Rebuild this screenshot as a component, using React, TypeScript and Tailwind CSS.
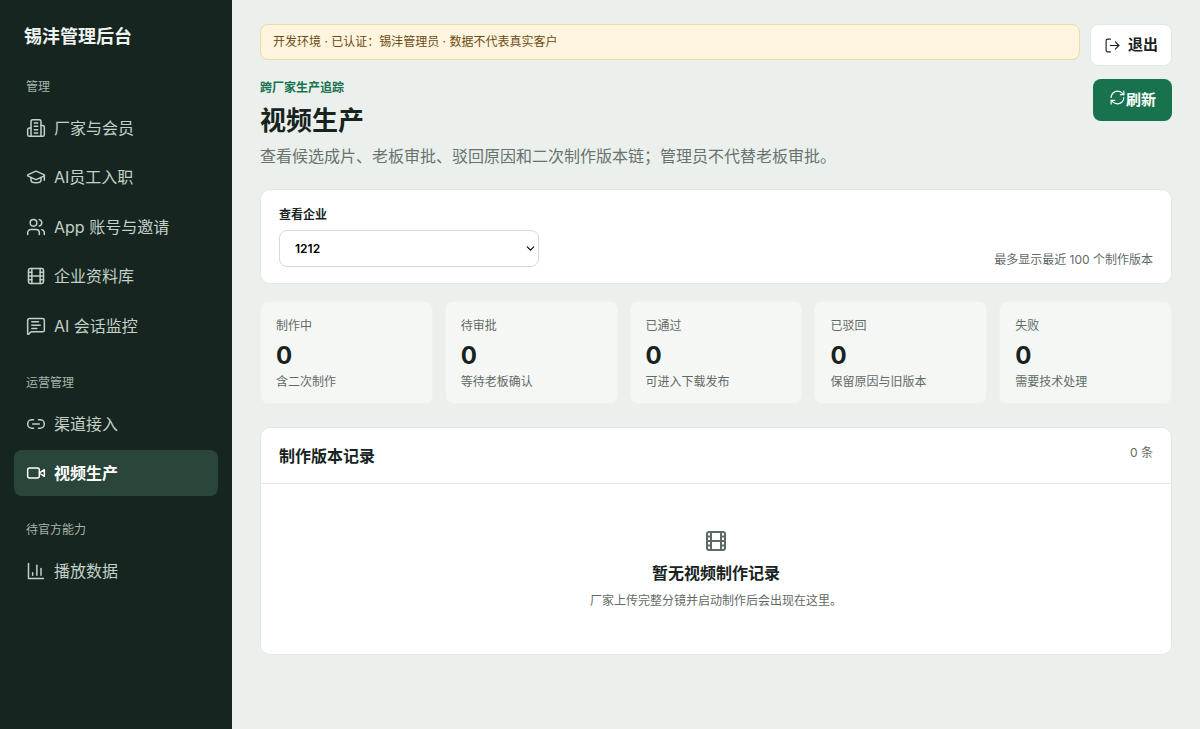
import {
  ChevronDown,
  Film,
  GraduationCap,
  Link2,
  LogOut,
  MessageSquareText,
  RefreshCw,
  Users,
} from "lucide-react";
import type { ReactNode } from "react";

function Glyph({ children }: { children: ReactNode }) {
  return (
    <svg
      width="20"
      height="20"
      viewBox="0 0 24 24"
      fill="none"
      stroke="currentColor"
      strokeWidth={1.8}
      strokeLinecap="round"
      strokeLinejoin="round"
    >
      {children}
    </svg>
  );
}

function BuildingIcon() {
  return (
    <Glyph>
      <path d="M6 22V4a2 2 0 0 1 2-2h8a2 2 0 0 1 2 2v18Z" />
      <path d="M6 12H4a2 2 0 0 0-2 2v6a2 2 0 0 0 2 2h2" />
      <path d="M18 9h2a2 2 0 0 1 2 2v9a2 2 0 0 1-2 2h-2" />
      <path d="M10 6h4" />
      <path d="M10 10h4" />
      <path d="M10 14h4" />
      <path d="M10 18h4" />
    </Glyph>
  );
}

function VideoIcon() {
  return (
    <Glyph>
      <path d="m22 8-6 4 6 4V8Z" />
      <rect x="2" y="6" width="14" height="12" rx="2" />
    </Glyph>
  );
}

function ChartIcon() {
  return (
    <Glyph>
      <path d="M3 3v18h18" />
      <path d="M13 17V5" />
      <path d="M18 17V9" />
      <path d="M8 17v-3" />
    </Glyph>
  );
}

const navGroups = [
  {
    title: "管理",
    items: [
      { label: "厂家与会员", icon: <BuildingIcon /> },
      { label: "AI员工入职", icon: <GraduationCap size={20} strokeWidth={1.8} /> },
      { label: "App 账号与邀请", icon: <Users size={20} strokeWidth={1.8} /> },
      { label: "企业资料库", icon: <Film size={20} strokeWidth={1.8} /> },
      { label: "AI 会话监控", icon: <MessageSquareText size={20} strokeWidth={1.8} /> },
    ],
  },
  {
    title: "运营管理",
    items: [
      { label: "渠道接入", icon: <Link2 size={20} strokeWidth={1.8} /> },
      { label: "视频生产", icon: <VideoIcon />, active: true },
    ],
  },
  {
    title: "待官方能力",
    items: [{ label: "播放数据", icon: <ChartIcon /> }],
  },
];

const stats = [
  { label: "制作中", note: "含二次制作" },
  { label: "待审批", note: "等待老板确认" },
  { label: "已通过", note: "可进入下载发布" },
  { label: "已驳回", note: "保留原因与旧版本" },
  { label: "失败", note: "需要技术处理" },
];

function Sidebar() {
  return (
    <aside className="w-[232px] shrink-0 bg-[#172520] px-[14px] pt-[25px]">
      <h1 className="px-[10px] text-[18px] leading-[24px] font-bold text-[#eef3ef]">
        锡沣管理后台
      </h1>
      <div className="mt-[27.5px]">
        {navGroups.map((group) => (
          <div key={group.title} className="mb-[24px]">
            <p className="mb-[8px] px-[12px] text-[12px] leading-[20px] text-[#a5b6ac]">
              {group.title}
            </p>
            <div className="flex flex-col gap-[3.5px]">
              {group.items.map((item) => (
                <div
                  key={item.label}
                  className={`flex h-[46px] items-center gap-[8px] rounded-lg px-[12px] text-[16px] ${item.active ? "bg-[#2a453a] font-bold text-white" : "text-[#c3d1c8]"}`}
                >
                  {item.icon}
                  <span>{item.label}</span>
                </div>
              ))}
            </div>
          </div>
        ))}
      </div>
    </aside>
  );
}

function StatCard({ label, note }: { label: string; note: string }) {
  return (
    <div className="flex-1 rounded-lg border border-[#eff2f0] bg-[#f5f7f5] px-[15px] pt-[15px] pb-[11px]">
      <p className="text-[12px] leading-[18px] text-[#5f6b65]">{label}</p>
      <p className="mt-[5px] text-[24px] leading-[32px] font-bold text-[#17231e]">0</p>
      <p className="text-[12px] leading-[20px] text-[#5f6b65]">{note}</p>
    </div>
  );
}

export default function App() {
  return (
    <div
      className="flex h-[729px] overflow-hidden bg-[#ebf0ed]"
      style={{ fontFamily: 'Inter, "Noto Sans CJK SC", sans-serif' }}
    >
      <Sidebar />
      <main className="flex-1 px-[28px] pt-[24px]">
        <div className="flex items-start gap-[10px]">
          <div className="flex h-[36px] flex-1 items-center rounded-lg border border-[#f0d9a4] bg-[#fff5de] px-[12px] text-[12px] text-[#6b4a12]">
            开发环境 · 已认证：锡沣管理员 · 数据不代表真实客户
          </div>
          <button className="flex h-[42px] w-[82px] items-center justify-center gap-[7px] rounded-lg border border-[#e3e8e5] bg-white text-[15px] font-semibold text-[#17231e]">
            <LogOut size={17} strokeWidth={1.6} />
            退出
          </button>
        </div>
        <div className="mt-[13px] flex items-start justify-between">
          <div>
            <p className="pt-[1px] text-[12px] leading-[16px] font-semibold text-[#18724e]">
              跨厂家生产追踪
            </p>
            <h2 className="mt-[7px] text-[26px] leading-[36px] font-bold text-[#17231e]">视频生产</h2>
            <p className="mt-[5px] text-[16px] leading-[24px] text-[#68736d]">
              查看候选成片、老板审批、驳回原因和二次制作版本链；管理员不代替老板审批。
            </p>
          </div>
          <button className="flex h-[42px] w-[79px] items-center justify-center rounded-lg bg-[#18724e] text-[15px] font-bold text-white">
            <RefreshCw size={17} strokeWidth={1.6} className="mb-[6px]" />
            刷新
          </button>
        </div>
        <section className="mt-[21px] flex h-[95px] items-end justify-between rounded-[10px] border border-[#e3e8e5] bg-white px-[18px] pt-[16px] pb-[16px]">
          <div>
            <label className="block text-[12px] leading-[18px] font-semibold text-[#17231e]">查看企业</label>
            <div className="relative mt-[6px] w-[260px]">
              <select className="h-[37px] w-full appearance-none rounded-lg border border-[#d5dcd8] bg-white px-[15px] text-[12px] font-semibold text-black">
                <option>1212</option>
              </select>
              <ChevronDown size={13} strokeWidth={2} className="pointer-events-none absolute top-[12px] right-[2px] text-black" />
            </div>
          </div>
          <p className="-mb-[2px] text-[12px] leading-[18px] text-[#5f6b65]">最多显示最近 100 个制作版本</p>
        </section>
        <div className="mt-[17px] flex gap-[12px]">
          {stats.map((stat) => (
            <StatCard key={stat.label} label={stat.label} note={stat.note} />
          ))}
        </div>
        <section className="mt-[23px] h-[228px] rounded-[10px] border border-[#e3e8e5] bg-white">
          <div className="flex h-[56px] justify-between border-b border-[#e3e8e5] px-[18px]">
            <h3 className="pt-[17px] text-[16px] leading-[22px] font-semibold text-[#17231e]">制作版本记录</h3>
            <span className="pt-[16px] text-[12px] leading-[18px] text-[#5f6b65]">0 条</span>
          </div>
          <div className="flex flex-col items-center pt-[45px]">
            <Film size={24} strokeWidth={2} className="text-[#5f6b65]" />
            <p className="mt-[8px] text-[16px] leading-[24px] font-semibold text-[#17231e]">暂无视频制作记录</p>
            <p className="mt-[7px] text-[12px] leading-[18px] text-[#5f6b65]">
              厂家上传完整分镜并启动制作后会出现在这里。
            </p>
          </div>
        </section>
      </main>
    </div>
  );
}
